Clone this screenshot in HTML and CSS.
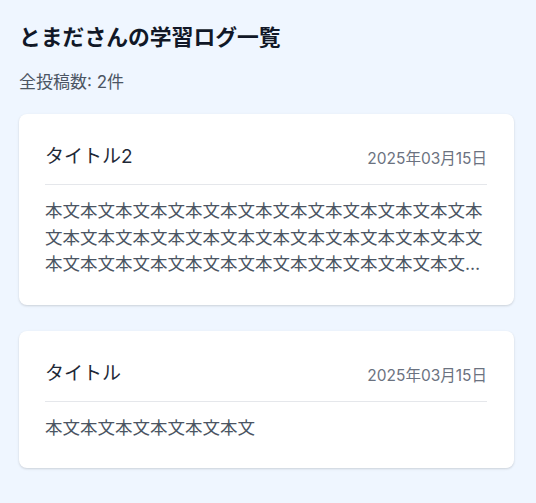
FILE: index.html
```html
<!DOCTYPE html>
<html lang="ja">
<head>
    <meta charset="UTF-8">
    <meta name="viewport" content="width=device-width, initial-scale=1.0">
    <title>学習ログ一覧</title>
    <link rel="stylesheet" href="styles.css">
</head>
<body>

<div class="container">
    <h1 class="page-title">とまださんの学習ログ一覧</h1>
    <div class="post-count">全投稿数: 2件</div>

    <div class="log-list">
        <div class="log-card">
            <div class="log-header">
                <div class="log-title">タイトル2</div>
                <div class="log-date">2025年03月15日</div>
            </div>
            <div class="log-body">本文本文本文本文本文本文本文本文本文本文本文本文本文本文本文本文本文本文本文本文本文本文本文本文本文本文本文本文本文本文本文本文本文本文本文本文本文本文本文本文本文</div>
        </div>

        <div class="log-card">
            <div class="log-header">
                <div class="log-title">タイトル</div>
                <div class="log-date">2025年03月15日</div>
            </div>
            <div class="log-body">本文本文本文本文本文本文</div>
        </div>
    </div>
</div>

</body>
</html>
```

FILE: styles.css
```css
/* Base page */
body {
    margin: 0;
    background-color: #eff6ff;
    font-family: Inter, "Noto Sans CJK JP", sans-serif;
    color: #111827;
}

.container {
    padding: 19px 22px 19px 19px;
}

/* Page heading */
.page-title {
    margin: 0;
    font-size: 21.8px;
    line-height: 36px;
    font-weight: bold;
    color: #111827;
}

.post-count {
    margin-top: 14px;
    font-size: 17px;
    line-height: 26px;
    color: #4b5563;
}

/* Log cards */
.log-list {
    display: flex;
    flex-direction: column;
    gap: 26px;
    margin-top: 19px;
}

.log-card {
    background-color: #ffffff;
    border-radius: 8px;
    padding: 26px 27px 27px 26px;
    box-shadow: 0 1px 3px rgba(0, 0, 0, 0.1), 0 1px 2px rgba(0, 0, 0, 0.06);
}

.log-header {
    display: flex;
    justify-content: space-between;
    align-items: center;
    padding-bottom: 10px;
    border-bottom: 1px solid #e5e7eb;
    margin-bottom: 13px;
}

.log-title {
    font-size: 19px;
    line-height: 34px;
    color: #1f2937;
}

.log-date {
    font-size: 15.5px;
    color: #6b7280;
}

.log-body {
    font-size: 17.5px;
    line-height: 26.5px;
    color: #4b5563;
    display: -webkit-box;
    -webkit-line-clamp: 3;
    -webkit-box-orient: vertical;
    overflow: hidden;
}
```
